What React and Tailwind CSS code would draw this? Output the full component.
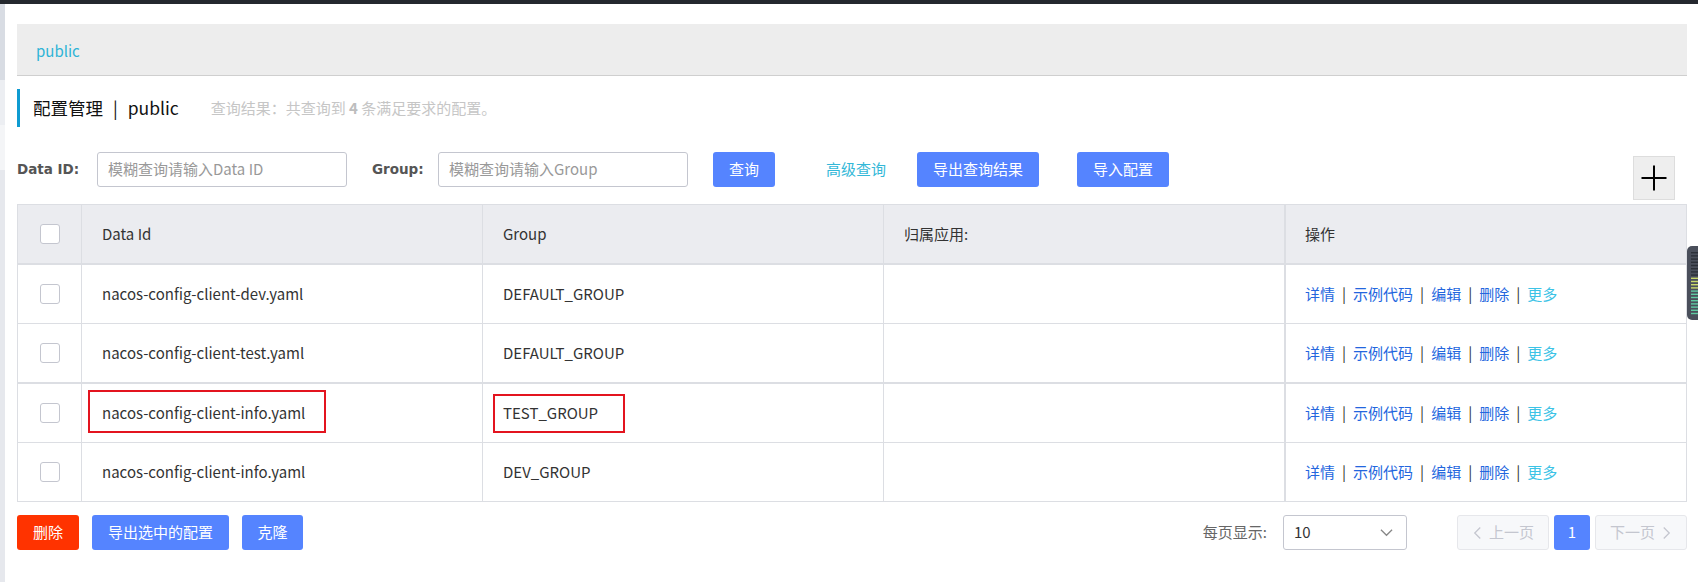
import React from 'react';

function Chevron({ dir = 'left', className = '' }) {
  const pts = dir === 'left' ? '9,2 3,8 9,14' : dir === 'right' ? '3,2 9,8 3,14' : '2,4 8,10 14,4';
  const vb = dir === 'down' ? '0 0 16 14' : '0 0 12 16';
  return (
    <svg viewBox={vb} className={className} fill="none" stroke="currentColor" strokeWidth="1.4">
      <polyline points={pts} />
    </svg>
  );
}

function Checkbox() {
  return <div className="w-[20px] h-[20px] rounded-[3px] border border-[#c4c6cf] bg-white" />;
}

function Actions() {
  const sep = <span className="px-[7px] text-[#333]">|</span>;
  return (
    <div className="flex items-center text-[15px]">
      <span className="text-[#2366de]">详情</span>
      {sep}
      <span className="text-[#2366de]">示例代码</span>
      {sep}
      <span className="text-[#2366de]">编辑</span>
      {sep}
      <span className="text-[#2366de]">删除</span>
      {sep}
      <span className="text-[#3cc3e6]">更多</span>
    </div>
  );
}

export default function App() {
  const rows = [
    { id: 'nacos-config-client-dev.yaml', group: 'DEFAULT_GROUP', h: 'h-[59px] border-b' },
    { id: 'nacos-config-client-test.yaml', group: 'DEFAULT_GROUP', h: 'h-[60px] border-b-2' },
    { id: 'nacos-config-client-info.yaml', group: 'TEST_GROUP', h: 'h-[59px] border-b', marked: true },
    { id: 'nacos-config-client-info.yaml', group: 'DEV_GROUP', h: 'h-[58px]' },
  ];
  const cols = 'grid grid-cols-[64px_401px_401px_402px_1fr]';
  const cell = 'flex items-center px-[20px] border-r border-[#dcdee3]';

  return (
    <div className="relative w-[1698px] h-[582px] bg-white overflow-hidden flex flex-col font-['Noto_Sans_CJK_SC','Noto_Sans',sans-serif] text-[#333]">
      <div className="h-[4px] bg-[#24282e] shrink-0" />
      <div className="flex flex-1">
        {/* left strip */}
        <div className="w-[5px] flex flex-col shrink-0">
          <div className="h-[76px] bg-[#d8dce3]" />
          <div className="h-[45px] bg-[#eceef2]" />
          <div className="h-[45px] bg-[#f4f5f7]" />
          <div className="flex-1 bg-[#e6e8ed]" />
        </div>

        {/* main */}
        <div className="flex-1 pl-[12px] pr-[11px] pt-[20px]">
          {/* breadcrumb */}
          <div className="h-[52px] bg-[#ededed] border-b border-[#cfcfcf] flex items-center pl-[19px] pt-[3px]">
            <span className="text-[15px] text-[#2fb4d6]">public</span>
          </div>

          {/* title */}
          <div className="mt-[13px] h-[38px] border-l-[3px] border-[#0f9bd1] flex items-center pl-[13px]">
            <span className="text-[17.5px] text-[#111]">配置管理</span>
            <span className="text-[17.5px] text-[#111] px-[10px]">|</span>
            <span className="text-[17.5px] text-[#111]">public</span>
            <span className="ml-[32px] text-[15px] text-[#c6c6c6]">
              查询结果：共查询到 <b className="font-bold text-[#bdbdbd]">4</b> 条满足要求的配置。
            </span>
          </div>

          {/* search row */}
          <div className="mt-[25px] flex items-start">
            <div className="w-[64px] whitespace-nowrap h-[35px] flex items-center font-['DejaVu_Sans',sans-serif] font-bold text-[13.5px] text-[#555]">Data ID:</div>
            <div className="ml-[16px] w-[250px] h-[35px] border border-[#c4c6cf] rounded-[3px] flex items-center pl-[10px] text-[15px] text-[#999]">
              模糊查询请输入Data ID
            </div>
            <div className="ml-[25px] w-[51px] whitespace-nowrap h-[35px] flex items-center font-['DejaVu_Sans',sans-serif] font-bold text-[13.5px] text-[#555]">Group:</div>
            <div className="ml-[15px] w-[250px] h-[35px] border border-[#c4c6cf] rounded-[3px] flex items-center pl-[10px] text-[15px] text-[#999]">
              模糊查询请输入Group
            </div>
            <div className="ml-[25px] w-[62px] h-[35px] bg-[#5584ff] rounded-[3px] flex items-center justify-center text-white text-[15px]">查询</div>
            <div className="ml-[51px] w-[60px] whitespace-nowrap h-[35px] flex items-center text-[15px] text-[#33b8d8]">高级查询</div>
            <div className="ml-[31px] w-[122px] h-[35px] bg-[#5584ff] rounded-[3px] flex items-center justify-center text-white text-[15px]">导出查询结果</div>
            <div className="ml-[38px] w-[92px] h-[35px] bg-[#5584ff] rounded-[3px] flex items-center justify-center text-white text-[15px]">导入配置</div>
            <div className="ml-auto mr-[12px] mt-[4px] w-[42px] h-[44px] bg-[#eeeeee] border border-[#dddddd] flex items-center justify-center">
              <svg viewBox="0 0 26 26" className="w-[26px] h-[26px]">
                <line x1="0.5" y1="13" x2="25.5" y2="13" stroke="#000" strokeWidth="2" />
                <line x1="13" y1="0.5" x2="13" y2="25.5" stroke="#000" strokeWidth="2" />
              </svg>
            </div>
          </div>

          {/* table */}
          <div className="mt-[4px] border border-[#dcdee3] text-[15px]">
            <div className={`${cols} h-[60px] bg-[#ebecf0] border-b-2 border-[#dcdee3]`}>
              <div className="flex items-center justify-center border-r border-[#dcdee3]"><Checkbox /></div>
              <div className={cell}>Data Id</div>
              <div className={cell}>Group</div>
              <div className={`${cell} border-r-2`}>归属应用:</div>
              <div className="flex items-center px-[19px]">操作</div>
            </div>
            {rows.map((r, i) => (
              <div key={i} className={`${cols} ${r.h} border-[#dcdee3] bg-white`}>
                <div className="flex items-center justify-center border-r border-[#dcdee3]"><Checkbox /></div>
                <div className={`${cell} relative`}>
                  {r.id}
                  {r.marked && (
                    <div className="absolute left-[6px] top-[6px] w-[238px] h-[43px] border-2 border-[#e3141f]" />
                  )}
                </div>
                <div className={`${cell} relative`}>
                  {r.group}
                  {r.marked && (
                    <div className="absolute left-[10px] top-[10px] w-[132px] h-[39px] border-2 border-[#e3141f]" />
                  )}
                </div>
                <div className={`${cell} border-r-2`} />
                <div className="flex items-center px-[19px]"><Actions /></div>
              </div>
            ))}
          </div>

          {/* bottom bar */}
          <div className="mt-[13px] flex items-center h-[35px] text-[15px]">
            <div className="w-[62px] h-[35px] bg-[#ff3300] rounded-[3px] flex items-center justify-center text-white">删除</div>
            <div className="ml-[13px] w-[137px] h-[35px] bg-[#5584ff] rounded-[3px] flex items-center justify-center text-white">导出选中的配置</div>
            <div className="ml-[13px] w-[61px] h-[35px] bg-[#5584ff] rounded-[3px] flex items-center justify-center text-white">克隆</div>

            <div className="ml-auto flex items-center">
              <span className="text-[#666]">每页显示:</span>
              <div className="ml-[16px] w-[124px] h-[35px] border border-[#c4c6cf] rounded-[3px] flex items-center pl-[10px] pr-[12px] text-[#333]">
                <span>10</span>
                <Chevron dir="down" className="ml-auto w-[15px] h-[13px] text-[#888]" />
              </div>
              <div className="ml-[50px] w-[92px] h-[35px] bg-[#f7f8fa] border border-[#e6e7eb] rounded-[3px] flex items-center justify-center text-[#c4c6cf]">
                <Chevron dir="left" className="w-[11px] h-[16px] mr-[6px]" />
                上一页
              </div>
              <div className="ml-[5px] w-[36px] h-[35px] bg-[#5584ff] rounded-[3px] flex items-center justify-center text-white">1</div>
              <div className="ml-[5px] w-[92px] h-[35px] bg-[#f7f8fa] border border-[#e6e7eb] rounded-[3px] flex items-center justify-center text-[#c4c6cf]">
                下一页
                <Chevron dir="right" className="w-[11px] h-[16px] ml-[6px]" />
              </div>
            </div>
          </div>
        </div>
      </div>

      {/* overlay widget at right edge */}
      <div className="absolute right-0 top-[246px] w-[11px] h-[74px] bg-[#4a4f5b] rounded-l-[5px]">
        <svg viewBox="0 0 11 74" className="w-[11px] h-[74px]">
          {Array.from({ length: 20 }).map((_, i) => {
            const y = 6 + i * 3.2;
            const c = i < 8 ? '#2c3038' : i < 12 ? '#c9d86a' : '#5fc9a2';
            return <rect key={i} x="4" y={y} width="7" height="1.4" fill={c} />;
          })}
        </svg>
      </div>
    </div>
  );
}
